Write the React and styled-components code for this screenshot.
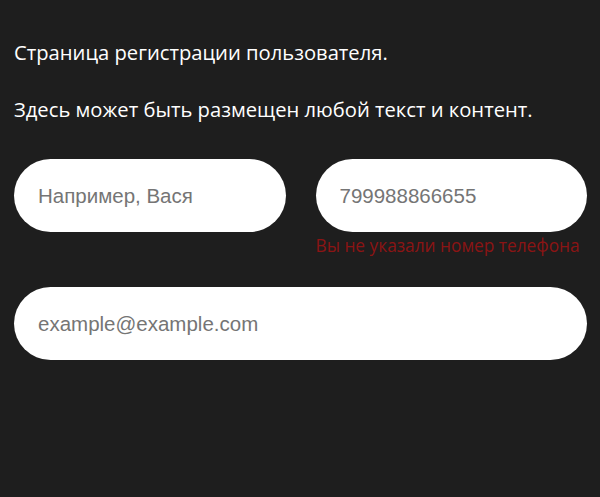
import React from "react";
import styled, { createGlobalStyle } from "styled-components";

const Global = createGlobalStyle`
  html, body { margin: 0; padding: 0; background: #1e1e1e; }
  body { font-family: "Open Sans", "Noto Sans", sans-serif; }
  * { box-sizing: border-box; }
`;

const Page = styled.div`
  min-height: 497px;
  padding: 36px 13px 0 14px;
  background: #1e1e1e;
  color: #ffffff;
`;

const Text = styled.p`
  margin: 0 0 25px;
  font-family: "Open Sans", "Noto Sans", sans-serif;
  font-size: 20.2px;
  line-height: 32px;
  color: #ffffff;
`;

const Form = styled.form`
  display: grid;
  grid-template-columns: 1fr 1fr;
  column-gap: 30px;
  row-gap: 27px;
  margin-top: 34px;
`;

const Field = styled.div`
  display: flex;
  flex-direction: column;
  grid-column: ${(p) => (p.$wide ? "1 / -1" : "auto")};
`;

const Input = styled.input`
  height: 73px;
  width: 100%;
  border: none;
  border-radius: 37px;
  background: #ffffff;
  padding: 0 24px;
  font-family: "Liberation Sans", Arial, sans-serif;
  font-size: 20.5px;
  color: #333;
  outline: none;
  &::placeholder { color: #757575; }
`;

const Error = styled.span`
  font-family: "Open Sans", "Noto Sans", sans-serif;
  font-size: 17.3px;
  line-height: 28px;
  color: #8b1414;
  height: 28px;
`;

export default function App() {
  return (
    <>
      <Global />
      <Page>
        <Text>Страница регистрации пользователя.</Text>
        <Text>Здесь может быть размещен любой текст и контент.</Text>
        <Form onSubmit={(e) => e.preventDefault()}>
          <Field>
            <Input type="text" placeholder="Например, Вася" />
            <Error />
          </Field>
          <Field>
            <Input type="tel" placeholder="799988866655" />
            <Error>Вы не указали номер телефона</Error>
          </Field>
          <Field $wide>
            <Input type="email" placeholder="example@example.com" />
          </Field>
        </Form>
      </Page>
    </>
  );
}
